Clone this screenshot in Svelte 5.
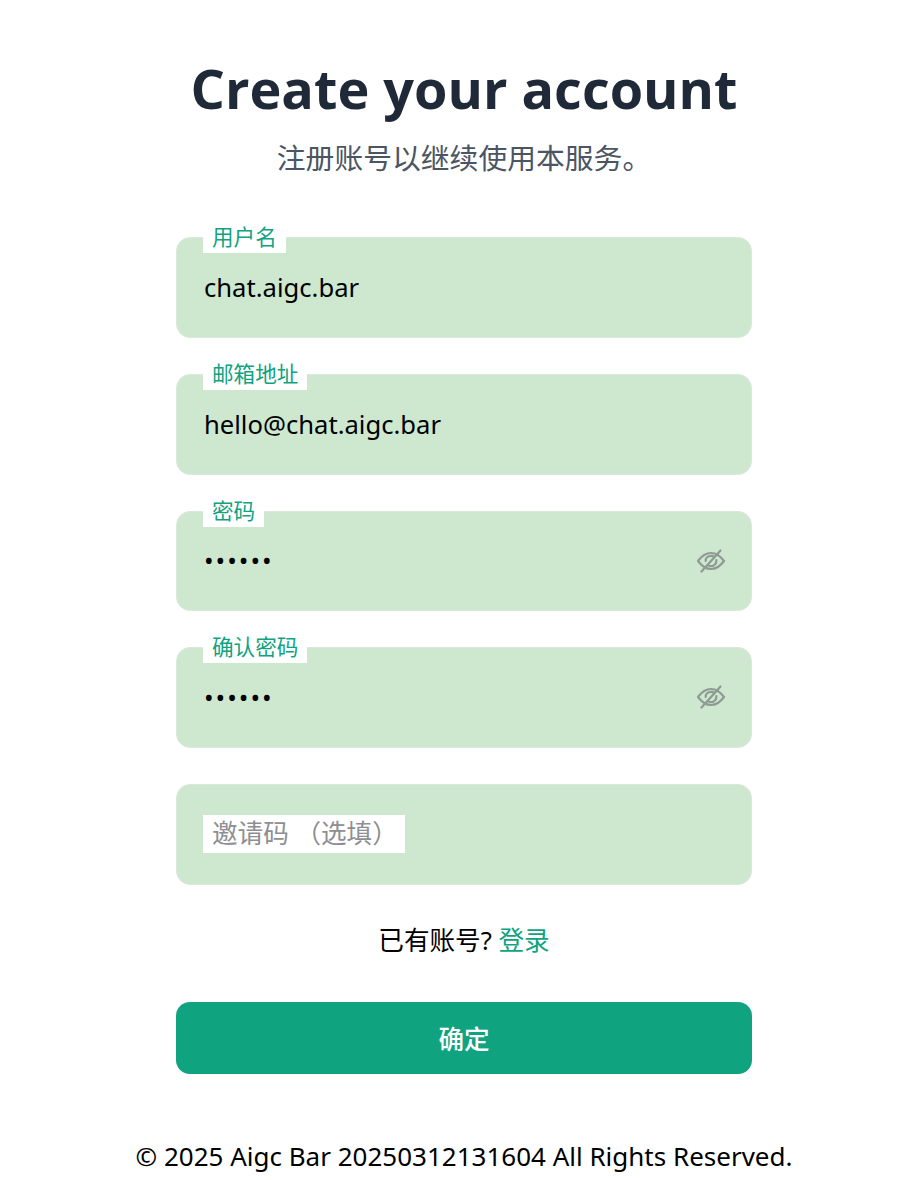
<script>
    const fields = [
        { id: 'username', label: '用户名', type: 'text', value: 'chat.aigc.bar' },
        { id: 'email', label: '邮箱地址', type: 'text', value: 'hello@chat.aigc.bar' },
        { id: 'password', label: '密码', type: 'password', value: '123456', eye: true },
        { id: 'confirm', label: '确认密码', type: 'password', value: '123456', eye: true }
    ];
</script>

<main>
    <h1>Create your account</h1>
    <p class="sub">注册账号以继续使用本服务。</p>

    <form on:submit|preventDefault>
        {#each fields as f}
            <div class="field">
                <input id={f.id} type={f.type} value={f.value} />
                <label for={f.id}>{f.label}</label>
                {#if f.eye}
                    <button type="button" class="eye" aria-label="show password">
                        <svg viewBox="0 0 30 24" width="30" height="24" fill="none" stroke="currentColor" stroke-width="2.2" stroke-linecap="round" stroke-linejoin="round">
                            <path d="M2 12 C6 6.5 10 4 15 4 C20 4 24 6.5 28 12 C24 17.5 20 20 15 20 C10 20 6 17.5 2 12 Z" />
                            <path d="M9.6 12 C9.6 8.8 12 6.8 15 6.8 C16.2 6.8 17.3 7.1 18.2 7.8 M20.4 11 C20.7 14.4 18.2 17.2 15 17.2 C13.8 17.2 12.8 16.9 11.9 16.3" />
                            <path d="M5.5 22.5 L24.5 1.5" />
                        </svg>
                    </button>
                {/if}
            </div>
        {/each}

        <div class="field">
            <input id="invite" type="text" />
            <label for="invite" class="empty">邀请码 （选填）</label>
        </div>

        <p class="login">已有账号? <a href="#login">登录</a></p>

        <button type="submit" class="submit">确定</button>
    </form>

    <footer>© 2025 Aigc Bar 20250312131604 All Rights Reserved.</footer>
</main>

<style>
    :global(body) {
        margin: 0;
        background: #fff;
    }

    main {
        box-sizing: border-box;
        width: 913px;
        height: 1180px;
        padding: 50px 0 0 15px;
        display: flex;
        flex-direction: column;
        align-items: center;
        overflow: hidden;
        font-family: "Noto Sans", "Noto Sans CJK SC", sans-serif;
    }

    h1 {
        margin: 0;
        font-size: 54px;
        line-height: 76px;
        font-weight: 700;
        color: #1f2937;
        font-family: "Open Sans", "Noto Sans CJK SC", sans-serif;
    }

    .sub {
        margin: 12px 0 0;
        font-size: 28.8px;
        line-height: 40px;
        color: #4b5563;
    }

    form {
        width: 576px;
        margin-top: 59px;
        display: flex;
        flex-direction: column;
        gap: 36px;
    }

    .field {
        position: relative;
        height: 100.8px;
    }

    input {
        box-sizing: border-box;
        display: block;
        width: 100%;
        height: 100%;
        padding: 0 27px;
        border: 1px solid #dce8dd;
        border-radius: 14px;
        background: #cde8cf;
        color: #000;
        font-size: 25.6px;
        font-family: inherit;
        outline: none;
    }

    input[type="password"] {
        letter-spacing: 2px;
    }

    label {
        position: absolute;
        left: 27px;
        top: -12px;
        padding: 0 9px;
        height: 28px;
        line-height: 24px;
        background: #fff;
        color: #10a37f;
        font-size: 21.6px;
    }

    label.empty {
        top: 31px;
        width: 184px;
        height: 38px;
        line-height: 38px;
        color: #8e8e93;
        font-size: 25.6px;
        white-space: pre;
    }

    .eye {
        position: absolute;
        right: 26px;
        top: 38px;
        padding: 0;
        border: 0;
        background: none;
        color: #8f9a94;
        line-height: 0;
    }

    .login {
        margin: 0 0 5px;
        text-align: center;
        font-size: 25.6px;
        line-height: 40px;
        color: #000;
    }

    a {
        color: #10a37f;
        text-decoration: none;
    }

    .submit {
        height: 72px;
        border: 0;
        border-radius: 14px;
        background: #10a37f;
        color: #fff;
        font-size: 25.6px;
        font-weight: 500;
        font-family: inherit;
    }

    footer {
        margin-top: 62px;
        font-size: 26px;
        line-height: 40px;
        color: #000;
        white-space: nowrap;
    }
</style>
